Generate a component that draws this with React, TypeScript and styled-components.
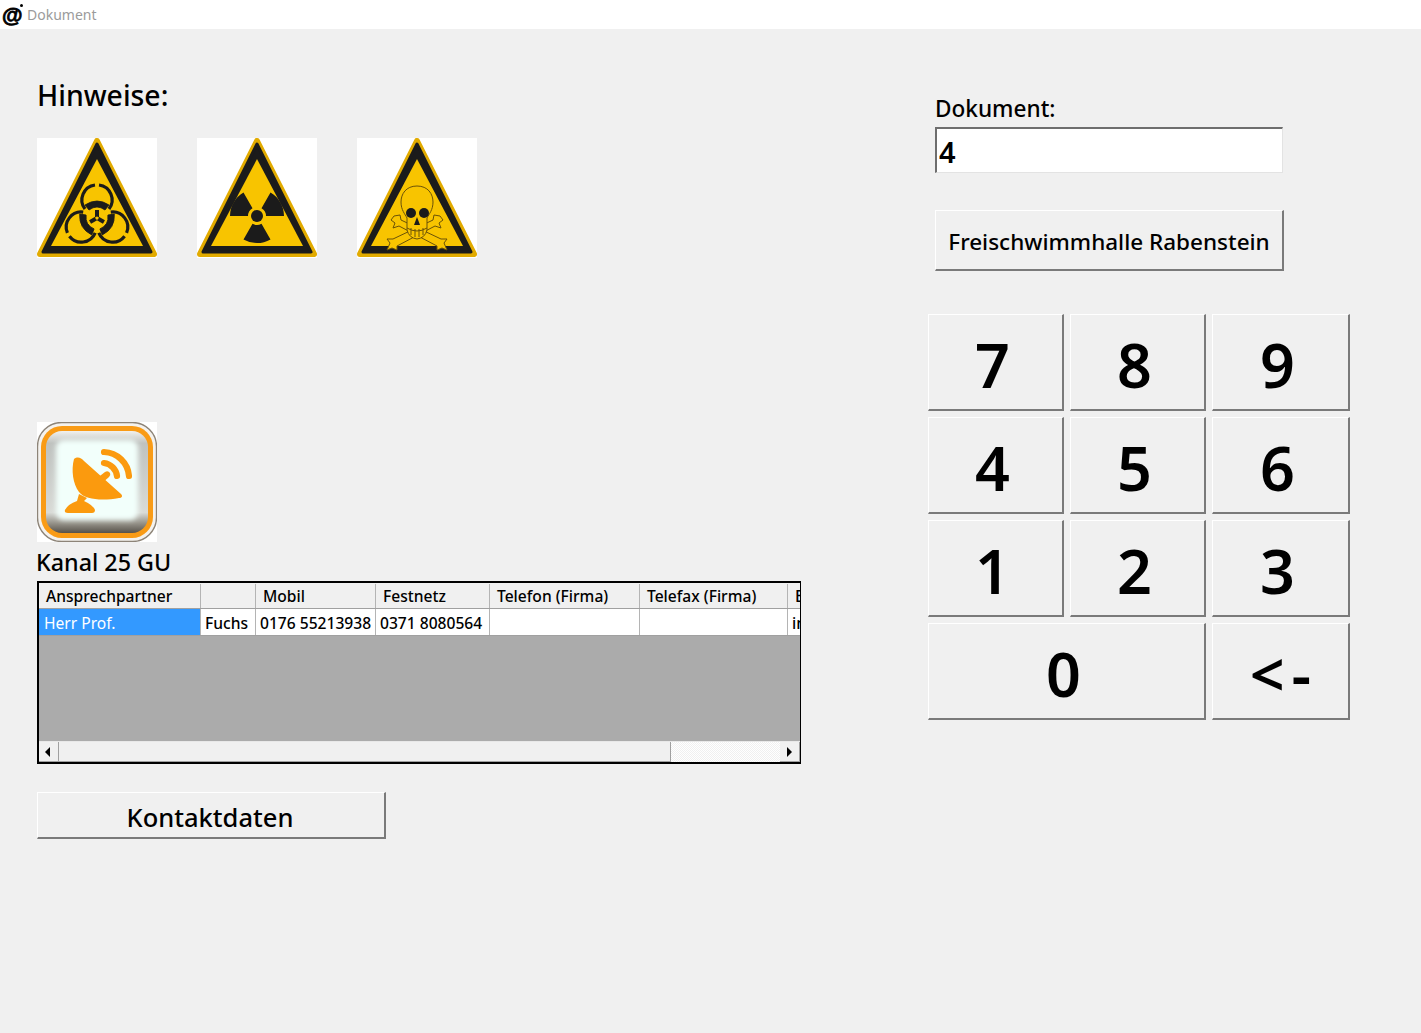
import styled, { createGlobalStyle } from "styled-components";

const Global = createGlobalStyle`
  html, body { margin: 0; padding: 0; background: #f0f0f0; }
  body { font-family: "Noto Sans", "Open Sans", "Liberation Sans", sans-serif; color: #000; }
  svg { display: block; }
`;

const Page = styled.div`
  width: 1421px;
  height: 1033px;
  overflow: hidden;
  background: #f0f0f0;
`;

const TitleBar = styled.header`
  height: 29px;
  background: #fff;
  display: flex;
  align-items: center;
  padding-left: 2px;
  box-sizing: border-box;
`;

const AppLogo = styled.span`
  position: relative;
  width: 25px;
  font-size: 21px;
  line-height: 29px;
  font-weight: 700;
  color: #000;
  font-family: "Liberation Sans", sans-serif;
  -webkit-text-stroke: 0.8px #000;
  margin-top: -1px;
  &::after {
    content: "";
    position: absolute;
    left: 18px;
    top: 4px;
    width: 3px;
    height: 3px;
    background: #000;
    border-radius: 50%;
  }
`;

const TitleText = styled.span`
  font-size: 14px;
  color: #9b9b9b;
`;

const Content = styled.main`
  display: flex;
  align-items: flex-start;
`;

const LeftColumn = styled.section`
  width: 928px;
  padding: 46px 0 0 37px;
  box-sizing: border-box;
`;

const RightColumn = styled.section`
  width: 430px;
  padding-top: 65px;
`;

const Heading = styled.h2`
  margin: 0;
  height: 63px;
  font-size: 28.4px;
  line-height: 40px;
  font-weight: 500;
`;

const SignRow = styled.div`
  display: flex;
  gap: 40px;
  height: 284px;
`;

const ChannelLabel = styled.div`
  font-size: 23.3px;
  line-height: 41px;
  height: 39px;
  margin-left: -1px;
  font-weight: 500;
`;

const Table = styled.div`
  width: 764px;
  height: 183px;
  box-sizing: border-box;
  border: 2px solid #000;
  border-right-width: 1px;
  background: #ababab;
  display: flex;
  flex-direction: column;
  overflow: hidden;
`;

const GridRow = styled.div<{ $header?: boolean }>`
  display: grid;
  grid-template-columns: 162px 55px 120px 114px 150px 148px 60px;
  height: ${(p) => (p.$header ? "26px" : "27px")};
  background: ${(p) => (p.$header ? "#f0f0f0" : "#fff")};
  border-bottom: 1px solid #a0a0a0;
  box-sizing: border-box;
  font-size: 15.6px;
  font-weight: 500;
  flex: none;
  width: 809px;
`;

const HeaderCell = styled.div`
  padding: 1px 0 0 7px;
  line-height: 22px;
  white-space: nowrap;
  overflow: hidden;
  border-right: 1px solid #b4b4b4;
  margin-top: 1px;
  box-sizing: border-box;
`;

const DataCell = styled.div<{ $selected?: boolean }>`
  padding: 1px 0 0 ${(p) => (p.$selected ? "5px" : "4px")};
  line-height: 27px;
  white-space: nowrap;
  overflow: hidden;
  box-sizing: border-box;
  color: ${(p) => (p.$selected ? "#fff" : "#000")};
  background: ${(p) => (p.$selected ? "#3399ff" : "#fff")};
  border-right: 1px solid #b4b4b4;
  font-weight: ${(p) => (p.$selected ? 400 : 500)};
`;

const GridFill = styled.div`
  flex: 1;
`;

const ScrollBar = styled.div`
  height: 21px;
  flex: none;
  display: flex;
  background: repeating-conic-gradient(#f0f0f0 0 25%, #fff 0 50%) 0 0 / 2px 2px;
  border-top: 1px solid #e8e8e8;
  box-sizing: border-box;
`;

const ScrollArrow = styled.div<{ $dir: "left" | "right" }>`
  width: 20px;
  height: 20px;
  box-sizing: border-box;
  background: #f0f0f0;
  border-right: 1px solid #a0a0a0;
  border-bottom: 1px solid #a0a0a0;
  display: flex;
  align-items: center;
  justify-content: center;
  padding-right: ${(p) => (p.$dir === "left" ? "3px" : "0")};
  margin-left: ${(p) => (p.$dir === "right" ? "auto" : "0")};
  &::before {
    content: "";
    border-top: 5px solid transparent;
    border-bottom: 5px solid transparent;
    ${(p) =>
      p.$dir === "left"
        ? "border-right: 5px solid #000;"
        : "border-left: 5px solid #000;"}
  }
`;

const ScrollThumb = styled.div`
  width: 612px;
  height: 20px;
  box-sizing: border-box;
  background: #f0f0f0;
  border-right: 1px solid #a0a0a0;
  border-bottom: 1px solid #a0a0a0;
`;

const BevelButton = styled.button`
  display: block;
  box-sizing: border-box;
  margin: 0;
  padding: 0;
  background: #f0f0f0;
  color: #000;
  font-family: inherit;
  border-style: solid;
  border-width: 1px 2px 2px 1px;
  border-color: #fff #7a7a7a #7a7a7a #fff;
  text-align: center;
`;

const ContactButton = styled(BevelButton)`
  width: 349px;
  height: 47px;
  margin-top: 28px;
  padding: 3px 2px 0 0;
  font-size: 25.5px;
  font-weight: 500;
`;

const FieldBlock = styled.div`
  padding-left: 7px;
`;

const FieldLabel = styled.label`
  display: block;
  height: 33px;
  font-size: 22.6px;
  line-height: 29px;
  font-weight: 500;
`;

const FieldInput = styled.input`
  display: block;
  width: 348px;
  height: 46px;
  box-sizing: border-box;
  padding: 2px 0 0 2px;
  background: #fff;
  color: #000;
  border-style: solid;
  border-width: 2px 1px 1px 2px;
  border-color: #6e6e6e #e3e3e3 #e3e3e3 #6e6e6e;
  font-family: inherit;
  font-size: 29px;
  font-weight: 600;
  outline: none;
`;

const PlaceButton = styled(BevelButton)`
  width: 349px;
  height: 61px;
  margin-top: 37px;
  padding-top: 3px;
  font-size: 22.5px;
  font-weight: 500;
  white-space: nowrap;
`;

const Keypad = styled.div`
  display: grid;
  grid-template-columns: 136px 136px 138px;
  grid-auto-rows: 97px;
  gap: 6px;
  margin-top: 43px;
`;

const KeyButton = styled(BevelButton)<{ $wide?: boolean; $back?: boolean }>`
  grid-column: ${(p) => (p.$wide ? "span 2" : "auto")};
  font-size: 61px;
  line-height: 99px;
  font-weight: 600;
  padding-right: ${(p) => (p.$back ? "0" : "6px")};
  word-spacing: ${(p) => (p.$back ? "-9px" : "0")};
  white-space: nowrap;
`;

const WarningFrame = () => (
  <>
    <rect width="120" height="120" fill="#fff" />
    <path d="M60 3 L117 116 L3 116 Z" fill="#e2ab00" stroke="#e2ab00" strokeWidth="6" strokeLinejoin="round" />
    <path d="M60 6 L114 114 L6 114 Z" fill="#1b1b1b" stroke="#1b1b1b" strokeWidth="3" strokeLinejoin="round" />
    <path d="M60 21 L106 108 L14 108 Z" fill="#f8c400" />
  </>
);

const BiohazardSign = () => (
  <svg width="120" height="120" viewBox="0 0 120 120">
    <WarningFrame />
    {[0, 120, 240].map((deg) => (
      <g key={deg} transform={`rotate(${deg} 60 80)`} fill="none" stroke="#1b1b1b">
        <path d="M58 47 A15 15 0 0 0 48 71" strokeWidth="3.2" />
        <path d="M62 47 A15 15 0 0 1 72 71" strokeWidth="3.2" />
        <path d="M48 67 Q60 59 72 67 L68 72 Q60 66 52 72 Z" fill="#1b1b1b" strokeWidth="0.8" />
        <path d="M60 72 L60 79" strokeWidth="4" />
      </g>
    ))}
    <circle cx="60" cy="80" r="1.6" fill="#f8c400" />
  </svg>
);

const sector = (deg: number) => {
  const point = (a: number, r: number) => {
    const rad = ((a - 90) * Math.PI) / 180;
    return `${60 + r * Math.cos(rad)} ${78 + r * Math.sin(rad)}`;
  };
  return `M${point(deg - 30, 9)} L${point(deg - 30, 27)} A27 27 0 0 1 ${point(deg + 30, 27)} L${point(deg + 30, 9)} A9 9 0 0 0 ${point(deg - 30, 9)} Z`;
};

const RadiationSign = () => (
  <svg width="120" height="120" viewBox="0 0 120 120">
    <WarningFrame />
    <g fill="#1b1b1b">
      <path d={sector(-60)} />
      <path d={sector(60)} />
      <path d={sector(180)} />
      <circle cx="60" cy="78" r="6" />
    </g>
  </svg>
);

const SkullSign = () => (
  <svg width="120" height="120" viewBox="0 0 120 120">
    <WarningFrame />
    <g stroke="#6a5208" strokeWidth="1" fill="#f8c400">
      <path d="M37 78 L34 82 L38 85 L36 90 L42 88 L80 108 L80 112 L85 110 L90 112 L87 105 L90 101 L84 101 L44 82 L43 77 Z" />
      <path d="M83 78 L86 82 L82 85 L84 90 L78 88 L40 108 L40 112 L35 110 L30 112 L33 105 L30 101 L36 101 L76 82 L77 77 Z" />
      <path d="M60 48 C49 48 44 56 44 64 C44 72 48 76 50 80 L50 92 Q52 100 60 101 Q68 100 70 92 L70 80 C72 76 76 72 76 64 C76 56 71 48 60 48 Z" />
      <path d="M50 90 Q60 96 70 90 M54 90 L54 97 M58 91 L58 99 M62 91 L62 99 M66 90 L66 97" fill="none" />
    </g>
    <g fill="#1b1b1b">
      <circle cx="54" cy="75" r="5" />
      <circle cx="67" cy="75" r="5" />
      <path d="M60 79 L63 87 L57 87 Z" />
    </g>
  </svg>
);

const SatelliteTile = () => (
  <svg width="120" height="120" viewBox="0 0 120 120">
    <defs>
      <linearGradient id="bevel" x1="0" y1="0" x2="0" y2="1">
        <stop offset="0" stopColor="#f1f1ee" />
        <stop offset="0.12" stopColor="#bfc2bf" />
        <stop offset="0.8" stopColor="#d9dbd7" />
        <stop offset="0.9" stopColor="#98958c" />
        <stop offset="1" stopColor="#57524a" />
      </linearGradient>
      <filter id="soft" x="-10%" y="-10%" width="120%" height="120%">
        <feGaussianBlur stdDeviation="2.4" />
      </filter>
    </defs>
    <rect width="120" height="120" fill="#fff" />
    <rect x="0.5" y="0.5" width="119" height="119" rx="24" fill="#f4f2ee" stroke="#8d8478" strokeWidth="1.4" />
    <rect x="4" y="4" width="112" height="112" rx="21" fill="#f99b15" />
    <rect x="9" y="9" width="102" height="102" rx="16" fill="url(#bevel)" />
    <rect x="19" y="18" width="82" height="80" rx="8" fill="#f2fffb" filter="url(#soft)" />
    <g fill="#fb9a0e">
      <path d="M37 37 C41 34 44 36 47 39 L84 72 C86 74 85 76 82 76 C66 79 48 78 42 70 C36 62 34 48 37 37 Z" />
      <path d="M42 72 L50 76 L47 79 Q56 83 58 88 Q58 91 55 91 L31 91 Q27 91 28 88 Q31 82 40 79 Z" />
      <path d="M59 57 L68 50 Q71 48 73 51 Q74 53 72 55 L64 62 Z" />
    </g>
    <g fill="none" stroke="#fb9a0e" strokeWidth="6.2" strokeLinecap="round">
      <path d="M67 41 A15 15 0 0 1 80 54" />
      <path d="M67 30 A26 26 0 0 1 92 54" />
    </g>
  </svg>
);

const columns = ["Ansprechpartner", "", "Mobil", "Festnetz", "Telefon (Firma)", "Telefax (Firma)", "E-Mail"];
const row = ["Herr Prof.", "Fuchs", "0176 55213938", "0371 8080564", "", "", "info"];
const keys = ["7", "8", "9", "4", "5", "6", "1", "2", "3"];

export default function App() {
  return (
    <Page>
      <Global />
      <TitleBar>
        <AppLogo>@</AppLogo>
        <TitleText>Dokument</TitleText>
      </TitleBar>
      <Content>
        <LeftColumn>
          <Heading>Hinweise:</Heading>
          <SignRow>
            <BiohazardSign />
            <RadiationSign />
            <SkullSign />
          </SignRow>
          <SatelliteTile />
          <ChannelLabel>Kanal 25 GU</ChannelLabel>
          <Table>
            <GridRow $header>
              {columns.map((c, i) => (
                <HeaderCell key={i}>{c}</HeaderCell>
              ))}
            </GridRow>
            <GridRow>
              {row.map((c, i) => (
                <DataCell key={i} $selected={i === 0}>
                  {c}
                </DataCell>
              ))}
            </GridRow>
            <GridFill />
            <ScrollBar>
              <ScrollArrow $dir="left" />
              <ScrollThumb />
              <ScrollArrow $dir="right" />
            </ScrollBar>
          </Table>
          <ContactButton>Kontaktdaten</ContactButton>
        </LeftColumn>
        <RightColumn>
          <FieldBlock>
            <FieldLabel>Dokument:</FieldLabel>
            <FieldInput readOnly value="4" />
            <PlaceButton>Freischwimmhalle Rabenstein</PlaceButton>
          </FieldBlock>
          <Keypad>
            {keys.map((k) => (
              <KeyButton key={k}>{k}</KeyButton>
            ))}
            <KeyButton $wide>0</KeyButton>
            <KeyButton $back>{"< -"}</KeyButton>
          </Keypad>
        </RightColumn>
      </Content>
    </Page>
  );
}
